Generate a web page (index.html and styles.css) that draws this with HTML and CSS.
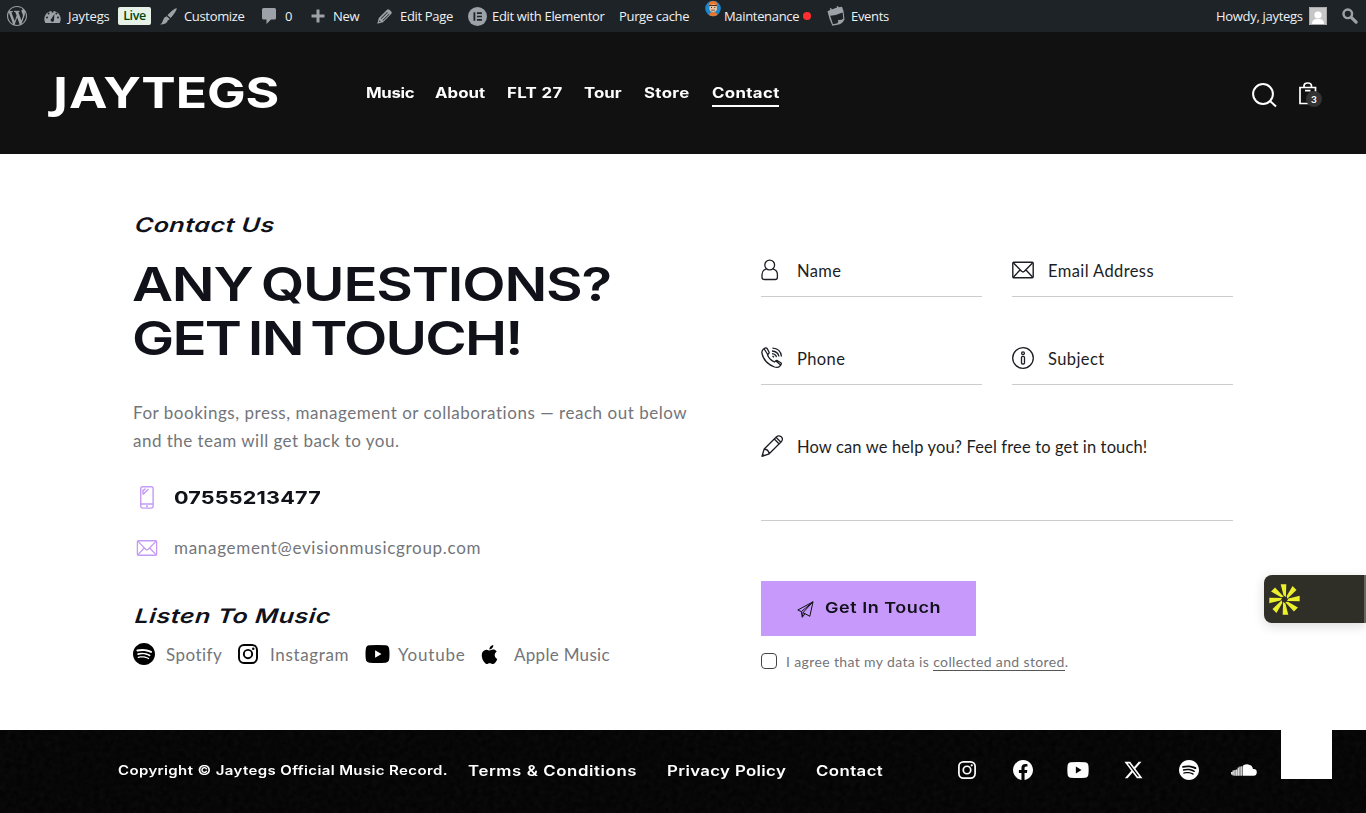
FILE: index.html
```html
<!DOCTYPE html>
<html lang="en">
<head>
    <meta charset="UTF-8">
    <meta name="viewport" content="width=device-width, initial-scale=1.0">
    <title>Contact - Jaytegs</title>
    <link rel="stylesheet" href="styles.css">
</head>
<body>
    <!-- shared icons -->
    <svg class="sprite" width="0" height="0">
        <symbol id="spotify" viewBox="0 0 24 24"><path d="M12 0C5.4 0 0 5.4 0 12s5.4 12 12 12 12-5.4 12-12S18.66 0 12 0zm5.521 17.34c-.24.359-.66.48-1.021.24-2.82-1.74-6.36-2.101-10.561-1.141-.418.122-.779-.179-.899-.539-.12-.421.18-.78.54-.9 4.56-1.021 8.52-.6 11.64 1.32.42.18.479.659.301 1.02zm1.44-3.3c-.301.42-.841.6-1.262.3-3.239-1.98-8.159-2.58-11.939-1.38-.479.12-1.02-.12-1.14-.6-.12-.48.12-1.021.6-1.141C9.6 9.9 15 10.561 18.72 12.84c.361.181.54.78.241 1.2zm.12-3.36C15.24 8.4 8.82 8.16 5.16 9.301c-.6.179-1.2-.181-1.38-.721-.18-.601.18-1.2.72-1.381 4.26-1.26 11.28-1.02 15.721 1.621.539.3.719 1.02.419 1.56-.299.421-1.02.599-1.559.3z"/></symbol>
        <symbol id="instagram" viewBox="0 0 24 24"><rect x="1.2" y="1.2" width="21.6" height="21.6" rx="6" fill="none" stroke="currentColor" stroke-width="2.3"/><circle cx="12" cy="12" r="5" fill="none" stroke="currentColor" stroke-width="2.3"/><circle cx="18.3" cy="5.7" r="1.5"/></symbol>
        <symbol id="youtube" viewBox="0 0 24 18"><path fill-rule="evenodd" d="M4 .3Q12-.3 20 .3Q23.4.6 23.7 4Q24.3 9 23.7 14Q23.4 17.4 20 17.7Q12 18.3 4 17.7Q.6 17.4.3 14Q-.3 9 .3 4Q.6.6 4 .3zM9.6 5.2v7.6L16 9z"/></symbol>
        <symbol id="apple" viewBox="0 0 24 24"><path d="M12.152 6.896c-.948 0-2.415-1.078-3.96-1.04-2.04.027-3.91 1.183-4.961 3.014-2.117 3.675-.546 9.103 1.519 12.09 1.013 1.454 2.208 3.09 3.792 3.039 1.52-.065 2.09-.987 3.935-.987 1.831 0 2.35.987 3.96.948 1.637-.026 2.676-1.48 3.676-2.948 1.156-1.688 1.636-3.325 1.662-3.415-.039-.013-3.182-1.221-3.22-4.857-.026-3.04 2.48-4.494 2.597-4.559-1.429-2.09-3.623-2.324-4.39-2.376-2-.156-3.675 1.09-4.61 1.09zM15.53 3.83c.843-1.012 1.4-2.427 1.245-3.83-1.207.052-2.662.805-3.532 1.818-.78.896-1.454 2.338-1.273 3.714 1.338.104 2.715-.688 3.559-1.701"/></symbol>
        <symbol id="mail" viewBox="0 0 22 17"><g fill="none" stroke="currentColor" stroke-width="1.4"><rect x=".8" y=".8" width="20.4" height="15.4" rx="1"/><path d="M1.5 1.5L9.6 9.8Q11 11 12.4 9.8L20.5 1.5M1.5 15.5L8 8.5M20.5 15.5L14 8.5"/></g></symbol>
    </svg>

    <div class="adminbar">
        <svg class="ab-icon i-wp" viewBox="0 0 20 20"><path d="M20 10c0-5.51-4.49-10-10-10C4.48 0 0 4.49 0 10c0 5.52 4.48 10 10 10 5.51 0 10-4.48 10-10zM7.78 15.37L4.37 6.22c.55-.02 1.17-.08 1.17-.08.5-.06.44-1.13-.06-1.11 0 0-1.45.11-2.37.11-.18 0-.37 0-.58-.01C4.12 2.69 6.87 1.11 10 1.11c2.33 0 4.45.87 6.05 2.34-.68-.11-1.65.39-1.65 1.58 0 .74.45 1.36.9 2.1.35.61.55 1.36.55 2.46 0 1.49-1.4 5-1.4 5l-3.03-8.37c.54-.02.82-.17.82-.17.5-.05.44-1.25-.06-1.22 0 0-1.44.12-2.38.12-.87 0-2.33-.12-2.33-.12-.5-.03-.56 1.2-.06 1.22l.92.08 1.26 3.41zM17.41 10c.24-.64.74-1.87.43-4.25.7 1.29 1.05 2.71 1.05 4.25 0 3.29-1.73 6.24-4.4 7.78.97-2.59 1.94-5.2 2.92-7.78zM6.1 18.09C3.12 16.65 1.11 13.53 1.11 10c0-1.3.23-2.48.72-3.59C3.25 10.3 4.67 14.2 6.1 18.09zm4.03-6.63l2.58 6.98c-.86.29-1.76.45-2.71.45-.79 0-1.57-.11-2.29-.33.81-2.38 1.62-4.74 2.42-7.1z"/></svg>
        <svg class="ab-icon i-dash" viewBox="0 0 17 14"><path d="M1.3 14A8.2 8.2 0 1 1 15.7 14z"/><g fill="#1d2327"><circle cx="3" cy="8.5" r="1"/><circle cx="4.6" cy="4.6" r="1"/><circle cx="8.5" cy="2.8" r="1"/><circle cx="12.4" cy="4.6" r="1"/><circle cx="14" cy="8.5" r="1"/><path d="M10.4 5L10 11a1.7 1.7 0 1 1-2.6-1.3z"/></g></svg>
        <span class="ab-text ab-site">Jaytegs</span>
        <span class="ab-live">Live</span>
        <svg class="ab-icon i-brush" viewBox="0 0 17 17"><path d="M16.6.3C17.3 1 15 5 10.6 10L7.5 7.3C11.6 2.6 15.8-.5 16.6.3zM6.7 8.2L9.7 10.9Q8.9 12 7.9 12.2Q6.8 16.5 0 16.6Q2.6 14.8 3.1 12Q3.9 9 6.7 8.2z"/></svg>
        <span class="ab-text ab-customize">Customize</span>
        <svg class="ab-icon i-comment" viewBox="0 0 14 16"><path d="M1.5 0h11q1.5 0 1.5 1.5v8.5q0 1.5-1.5 1.5H9L4.5 16v-4.5h-3Q0 11.5 0 10V1.5Q0 0 1.5 0z"/></svg>
        <span class="ab-text ab-zero">0</span>
        <svg class="ab-icon i-plus" viewBox="0 0 14 14"><path d="M5.5.5h3v5h5v3h-5v5h-3v-5h-5v-3h5z"/></svg>
        <span class="ab-text ab-new">New</span>
        <svg class="ab-icon i-pencil" viewBox="0 0 15 15"><path fill-rule="evenodd" d="M10 .8Q11.2-.2 12.4.8L14.2 2.6Q15.2 3.8 14.2 5L6 13.2L.3 14.7L1.8 9zM10.2 2.9L3.7 9.4L4.3 10L10.8 3.5zM12 4.7L5.5 11.2L6 11.7L12.5 5.2zM2.6 11.2L1.9 13.1L3.8 12.4z"/></svg>
        <span class="ab-text ab-edit">Edit Page</span>
        <svg class="ab-icon i-elementor" viewBox="0 0 18 18"><circle cx="9" cy="9" r="9"/><path fill="#1d2327" d="M5.2 5h1.7v8H5.2zM8.5 5h4.7v1.6H8.5zM8.5 8.2h4.7v1.6H8.5zM8.5 11.4h4.7V13H8.5z"/></svg>
        <span class="ab-text ab-elementor">Edit with Elementor</span>
        <span class="ab-text ab-purge">Purge cache</span>
        <svg class="i-worker" viewBox="0 0 16 16"><circle cx="8" cy="8" r="7.8" fill="#1787cf"/><path fill="#e8762c" d="M3.6 5.5Q3.5.4 8.2.4t4.5 5.1zM4 14.5q.5-3.1 4.2-3.1t4.2 3.1Q8 17 4 14.5z"/><circle cx="8.2" cy="7.6" r="3.9" fill="#e9c3a4"/><path fill="#4b2d20" d="M4.2 4.4h7.7v1H4.2zM6.2 9.2h3.6v.7H6.2zM6 6.5h1v1H6zM9.3 6.5h1v1h-1z"/></svg>
        <span class="ab-text ab-maint">Maintenance</span>
        <span class="ab-dot"></span>
        <svg class="ab-icon i-events" viewBox="0 0 18 20"><path fill-rule="evenodd" d="M.5 5.3L3.2 4L2.8 2.5L4.2 2L4.8 3.4L10 1.6L9.6.5L11 .1L11.5 1.2L15 .8L16.5 5L17.5 13.4Q15 18 10.5 18.7L5.4 19.7Q2 12.7.5 5.3zM3.2 9.7L6 18.3L10.5 17.3Q11.700 15.500 11 13.800Q14 14.500 16.300 12.800L15.600 6.500Q9 9.500 3.200 9.700z"/></svg>
        <span class="ab-text ab-events">Events</span>
        <div class="ab-right">
            <span class="ab-text ab-howdy">Howdy, jaytegs</span>
            <svg class="i-avatar" viewBox="0 0 18 18"><path fill="#c6c6c6" d="M0 0h18v18H0z"/><path fill="none" stroke="#aaa" d="M.5.5h17v17H.5z"/><circle cx="9" cy="8" r="3.6" fill="#fff"/><path fill="#fff" d="M3 17q0-4.500 4-5h4q4 .5 4 5z"/></svg>
            <svg class="i-ab-search" viewBox="0 0 16 16"><circle cx="5.8" cy="5.8" r="4.3" fill="none" stroke="#9ca2a7" stroke-width="2.4"/><path stroke="#9ca2a7" stroke-width="3.2" stroke-linecap="round" d="M9.8 9.8l4.3 4.3"/></svg>
        </div>
    </div>

    <header class="header">
        <a class="logo"><span class="wide"><span class="logo-j">J</span>AYTEGS</span></a>
        <nav class="nav">
            <a class="n1"><span class="wide">Music</span></a>
            <a><span class="wide">About</span></a>
            <a class="n3"><span class="wide">FLT 27</span></a>
            <a><span class="wide">Tour</span></a>
            <a class="n3"><span class="wide">Store</span></a>
            <a class="n3 active"><span class="wide">Contact</span></a>
        </nav>
        <div class="header-tools">
            <svg class="i-search" viewBox="0 0 25 25"><g fill="none" stroke="#fff" stroke-width="2"><circle cx="11" cy="11" r="9.9"/><path d="M18 18l6 5.5"/></g></svg>
            <div class="cart">
                <svg class="i-bag" viewBox="0 0 18 23"><g fill="none" stroke="#fff" stroke-width="1.7"><path d="M1 5.5h15.5v16H1zM5 5.5V4q0-3 3.750-3T12.500 4v1.500M6 8.700h5.500"/></g></svg>
                <span class="cart-count">3</span>
            </div>
        </div>
    </header>

    <main class="main">
        <section class="info">
            <h4 class="subtitle"><span class="wide">Contact Us</span></h4>
            <h1 class="title"><span class="wide t1">ANY QUESTIONS?</span><span class="wide t2">GET IN TOUCH!</span></h1>
            <p class="intro"><span class="l1">For bookings, press, management or collaborations — reach out below</span><br><span class="l2">and the team will get back to you.</span></p>
            <div class="contact-row phone">
                <svg class="i-mobile" viewBox="0 0 14 23"><g fill="none" stroke="#c49bf5" stroke-width="1.4"><rect x=".7" y=".7" width="12.4" height="21.4" rx="2"/><path d="M1 18h12M6 20.2h2M3 5l2.500-2.500M3 8.500L8.500 3M3 3.500v5"/></g></svg>
                <span class="wide">07555213477</span>
            </div>
            <div class="contact-row email">
                <svg class="i-mail"><use href="#mail"/></svg>
                <span class="mail-text">management@evisionmusicgroup.com</span>
            </div>
            <h4 class="subtitle listen"><span class="wide">Listen To Music</span></h4>
            <div class="music-links">
                <a class="a-spotify"><svg class="m-spotify"><use href="#spotify"/></svg><span>Spotify</span></a>
                <a class="a-instagram"><svg class="m-instagram"><use href="#instagram"/></svg><span>Instagram</span></a>
                <a class="a-youtube"><svg class="m-youtube"><use href="#youtube"/></svg><span>Youtube</span></a>
                <a class="a-apple"><svg class="m-apple"><use href="#apple"/></svg><span>Apple Music</span></a>
            </div>
        </section>

        <form class="form">
            <div class="fields">
                <label class="field">
                    <svg viewBox="0 0 22 22"><g fill="none" stroke="currentColor" stroke-width="1.3"><circle cx="8.7" cy="6" r="4.9"/><path d="M5.6 9.8Q1 11 1 15.5v2.8q0 2.2 2.2 2.2h11q2.2 0 2.2-2.2v-2.8Q16.4 11 11.8 9.8"/></g></svg>
                    <input type="text" placeholder="Name">
                </label>
                <label class="field">
                    <svg><use href="#mail"/></svg>
                    <input type="text" placeholder="Email Address">
                </label>
                <label class="field">
                    <svg viewBox="0 0 22 22"><g fill="none" stroke="currentColor" stroke-width="1.3"><path d="M2.5 2L4.5.9Q5.5.6 6.2 1.7L8 5Q8.5 6 7.5 6.8L6.5 7.8Q8 12.5 13.5 15L14.8 13.8Q15.5 13.2 16.5 13.7L19.8 15.8Q20.8 16.5 20 17.5L18.5 19.5Q17 21 13.5 20Q3 16 1 6.5Q.5 3.5 2.5 2zM3.2 2l3.5 5.5M15 14l4.5 4"/><path d="M11.5 1.2Q19.5 1.5 20.5 9.5M11 4Q17 4.3 18 9.5M11 6.7Q14.7 7 15.5 10.2M11.5 9l1.5 1.3"/></g></svg>
                    <input type="text" placeholder="Phone">
                </label>
                <label class="field">
                    <svg viewBox="0 0 22 22"><g fill="none" stroke="currentColor" stroke-width="1.3"><circle cx="11" cy="11" r="10.3"/><circle cx="11" cy="6.3" r="1.4"/><rect x="9.5" y="9.3" width="3" height="7.7" rx="1.2"/></g></svg>
                    <input type="text" placeholder="Subject">
                </label>
                <label class="field message">
                    <svg viewBox="0 0 22 22"><g fill="none" stroke="currentColor" stroke-width="1.3" stroke-linejoin="round"><path d="M1 21.3L3.2 14L15.5 1.8Q17.8-.2 20.2 1.8T20.5 6.5L8.2 18.8zM3.2 14Q7.5 14.5 8.2 18.8M13.3 4l4.7 4.7M15 2.3l4.7 4.7M1.5 19.3L3 20.7"/></g></svg>
                    <textarea placeholder="How can we help you? Feel free to get in touch!"></textarea>
                </label>
            </div>
            <button type="button" class="submit">
                <svg viewBox="0 0 17 17"><path fill="none" stroke="currentColor" stroke-width="1" stroke-linejoin="round" d="M16 .8L.8 9L4.3 10.6L5.3 16.2L8 12.7L12.8 15.3zM16 .8L4.3 10.6M16 .8L6 11.6L5.3 16.2M6 11.6L8 12.7"/></svg>
                <span class="wide">Get In Touch</span>
            </button>
            <label class="agree"><span class="box"></span><span class="agree-text">I agree that my data is <a>collected and stored</a>.</span></label>
        </form>
    </main>

    <footer class="footer">
        <svg class="noise"><filter id="grain"><feTurbulence type="fractalNoise" baseFrequency="0.18" numOctaves="3"/><feColorMatrix type="saturate" values="0"/></filter><rect width="100%" height="100%" filter="url(#grain)"/></svg>
        <p class="copyright"><span class="wide">Copyright © Jaytegs Official Music Record.</span></p>
        <nav class="footer-nav">
            <a class="f1"><span class="wide">Terms &amp; Conditions</span></a>
            <a class="f2"><span class="wide">Privacy Policy</span></a>
            <a class="f3"><span class="wide">Contact</span></a>
        </nav>
        <div class="socials">
            <svg class="s-insta"><use href="#instagram"/></svg>
            <svg class="s-face" viewBox="0 0 24 24"><path d="M24 12.073c0-6.627-5.373-12-12-12s-12 5.373-12 12c0 5.99 4.388 10.954 10.125 11.854v-8.385H7.078v-3.47h3.047V9.43c0-3.007 1.792-4.669 4.533-4.669 1.312 0 2.686.235 2.686.235v2.953H15.83c-1.491 0-1.956.925-1.956 1.874v2.25h3.328l-.532 3.47h-2.796v8.385C19.612 23.027 24 18.062 24 12.073z"/></svg>
            <svg class="s-tube"><use href="#youtube"/></svg>
            <svg class="s-x" viewBox="0 0 24 24"><path d="M18.9 1.15h3.68l-8.04 9.19L24 22.85h-7.41l-5.8-7.58-6.64 7.58H.47l8.6-9.83L0 1.15h7.59l5.24 6.93zM17.61 20.64h2.04L6.49 3.24H4.3z"/></svg>
            <svg class="s-spot"><use href="#spotify"/></svg>
            <svg class="s-cloud" viewBox="0 0 26 12"><path d="M12 1.5Q14.5.2 17 .4Q21.3.8 22 5Q25.7 4.6 25.8 8.2Q25.7 11.7 22.5 11.7H12z"/><path d="M.7 8v2.5M2.2 6.5v5M3.9 6v5.7M5.6 5.5v6.2M7.3 3.5v8.2M9 2.5v9.2M10.8 2.3v9.4" stroke="#ddd" stroke-width="1.45"/></svg>
        </div>
        <div class="scroll-top"></div>
    </footer>

    <div class="widget">
        <svg viewBox="-15.5 -15.5 31 31"><g fill="#ecf02a"><path id="ray" d="M-3.8-15.2h5.6L1.400-2.500L-.9-4z"/><use href="#ray" transform="rotate(45)"/><use href="#ray" transform="rotate(90)"/><use href="#ray" transform="rotate(135)"/><use href="#ray" transform="rotate(180)"/><use href="#ray" transform="rotate(225)"/><use href="#ray" transform="rotate(270)"/><use href="#ray" transform="rotate(315)"/></g></svg>
    </div>
</body>
</html>
```
FILE: styles.css
```css
* {
    box-sizing: border-box;
}
body {
    margin: 0;
    width: 1366px;
    height: 813px;
    overflow: hidden;
    position: relative;
    background: #fff;
    color: #73757a;
    font-family: Lato, "Liberation Sans", sans-serif;
    font-size: 17px;
}
h1, h4, p {
    margin: 0;
}
svg {
    flex: none;
    fill: currentColor;
}
.sprite {
    position: absolute;
}

/* display face: stretched sideways from its left edge */
.wide {
    display: inline-block;
    font-family: Inter, "Liberation Sans", sans-serif;
    font-weight: 700;
    white-space: nowrap;
    transform-origin: 0 50%;
    transform: scaleX(1.2);
}

/* admin bar */
.adminbar {
    display: flex;
    align-items: center;
    height: 32px;
    background: #1d2327;
    color: #f0f0f1;
    font-family: "Open Sans", "Noto Sans", sans-serif;
    font-size: 13px;
    line-height: 32px;
    white-space: nowrap;
}
.ab-text {
    flex: none;
    letter-spacing: -0.33px;
}
.ab-icon {
    color: #9ca2a7;
}
.i-wp { width: 20px; height: 20px; margin-left: 7px; }
.i-dash { width: 17px; height: 14px; margin-left: 17px; }
.ab-site { width: 43px; margin-left: 7px; letter-spacing: -0.1px; }
.ab-live {
    width: 33px;
    height: 18px;
    margin-left: 7px;
    background: #e6f2e8;
    border-radius: 2px;
    color: #00450c;
    font-weight: 600;
    font-size: 12.5px;
    line-height: 18px;
    text-align: center;
    letter-spacing: -0.4px;
}
.i-brush { width: 17px; height: 17px; margin-left: 9px; }
.ab-customize { width: 61px; margin-left: 7px; }
.i-comment { width: 14px; height: 16px; margin-left: 17px; }
.ab-zero { width: 8px; margin-left: 9px; }
.i-plus { width: 14px; height: 14px; margin-left: 18px; }
.ab-new { width: 27px; margin-left: 8px; }
.i-pencil { width: 15px; height: 15px; margin-left: 17px; }
.ab-edit { width: 54px; margin-left: 8px; }
.i-elementor { width: 19px; height: 19px; margin-left: 14px; }
.ab-elementor { width: 113px; margin-left: 5px; }
.ab-purge { width: 71px; margin-left: 14px; }
.i-worker { width: 16px; height: 17px; margin: -16px 0 0 15px; }
.ab-maint { width: 75px; margin-left: 3px; }
.ab-dot {
    width: 8px;
    height: 8px;
    margin-left: 4px;
    border-radius: 50%;
    background: #ff2f2f;
}
.i-events { width: 18px; height: 20px; margin-left: 16px; }
.ab-events { margin-left: 6px; }
.ab-right {
    display: flex;
    align-items: center;
    margin-left: auto;
}
.ab-howdy { width: 87px; letter-spacing: -0.3px; }
.i-avatar { width: 18px; height: 18px; margin-left: 6px; }
.i-ab-search { width: 16px; height: 16px; margin: 0 8px 0 15px; }

/* header */
.header {
    display: flex;
    height: 122px;
    background: #111;
    color: #fff;
}
.logo {
    width: 318px;
    padding: 32px 0 0 52px;
    font-size: 43px;
    line-height: 56px;
    letter-spacing: -0.1px;
}
.logo-j {
    font-family: "Open Sans", sans-serif;
}
.nav {
    display: grid;
    grid-template-columns: 48px 51px 56px 39px 47px 67px;
    column-gap: 21px;
    align-content: start;
    margin: 50px 0 0 48px;
    font-size: 14px;
    line-height: 22px;
}
.nav a {
    height: 25px;
}
.n1 { letter-spacing: -0.3px; }
.n3 { letter-spacing: 0.3px; }
.nav .active {
    border-bottom: 2px solid #fff;
}
.header-tools {
    display: flex;
    margin: 50px 42px 0 auto;
}
.i-search { width: 25px; height: 25px; margin-top: 1px; }
.cart {
    position: relative;
    width: 25px;
    margin-left: 22px;
}
.i-bag { width: 18px; height: 23px; }
.cart-count {
    position: absolute;
    left: 7px;
    top: 9px;
    width: 16px;
    height: 16px;
    border-radius: 50%;
    background: #333;
    font-size: 10px;
    font-weight: 700;
    line-height: 16px;
    text-align: center;
}

/* main */
.main {
    display: flex;
    height: 576px;
}
.info {
    width: 761px;
    padding: 56px 0 0 133px;
}
.subtitle {
    padding-left: 2px;
    color: #111219;
    font-size: 20px;
    line-height: 28px;
    letter-spacing: 0.4px;
}
.subtitle .wide {
    font-weight: 600;
    font-style: italic;
    transform: scaleX(1.25) skewX(-5deg);
}
.title {
    margin-top: 18px;
    margin-left: -1px;
    color: #111219;
    font-size: 47px;
    line-height: 54px;
    word-spacing: -4px;
}
.title .wide {
    display: block;
    font-weight: 600;
}
.t1 { letter-spacing: -1px; }
.t2 { letter-spacing: -1.5px; }
.intro {
    margin-top: 34px;
    line-height: 28px;
    white-space: nowrap;
}
.l1 { letter-spacing: 0.53px; }
.l2 { letter-spacing: 0.47px; }
.contact-row {
    display: flex;
    align-items: center;
    height: 28px;
}
.phone {
    margin-top: 28px;
    color: #111219;
    font-size: 18px;
    letter-spacing: 0.15px;
}
.i-mobile { width: 14px; height: 23px; margin: 1px 20px 0 7px; }
.email {
    margin-top: 22px;
}
.i-mail { width: 22px; height: 16px; margin: 1px 16px 0 3px; color: #c49bf5; }
.mail-text { letter-spacing: 0.7px; }
.listen {
    margin-top: 40px;
}
.music-links {
    display: grid;
    grid-template-columns: 105px 127px 115px 140px;
    margin-top: 10px;
    height: 28px;
}
.music-links a {
    display: flex;
    align-items: center;
    white-space: nowrap;
}
.music-links svg { color: #000; }
.m-spotify { width: 22px; height: 22px; margin-right: 11px; }
.m-instagram { width: 20px; height: 20px; margin-right: 12px; }
.m-youtube { width: 25px; height: 18px; margin-right: 8px; }
.m-apple { width: 19px; height: 19px; margin-right: 15px; }
.a-spotify { letter-spacing: 0.45px; }
.a-instagram { letter-spacing: 0.65px; }
.a-youtube { letter-spacing: 0.8px; }
.a-apple { letter-spacing: 0.3px; }

/* form */
.form {
    width: 472px;
    padding-top: 103px;
}
.fields {
    display: grid;
    grid-template-columns: 221px 221px;
    column-gap: 30px;
    row-gap: 48px;
}
.field {
    display: flex;
    height: 40px;
    border-bottom: 1px solid #ccc;
    color: #1c1e24;
}
.field svg {
    width: 22px;
    height: 22px;
    margin-top: 2px;
}
.field input,
.field textarea {
    flex: 1;
    min-width: 0;
    height: 28px;
    margin-left: 14px;
    padding: 0;
    border: 0;
    outline: 0;
    background: none;
    resize: none;
    color: #1c1e24;
    font: 16.5px/28px Lato, "Liberation Sans", sans-serif;
    letter-spacing: 0.4px;
}
.field textarea {
    letter-spacing: 0.14px;
}
.field ::placeholder {
    color: #1c1e24;
    opacity: 1;
}
.message {
    grid-column: span 2;
    height: 88px;
}
.submit {
    display: flex;
    align-items: center;
    width: 215px;
    height: 55px;
    margin-top: 60px;
    padding: 0 0 2px 36px;
    border: 0;
    background: #c799fb;
    color: #111219;
    font-size: 15px;
    letter-spacing: 0.45px;
}
.submit .wide {
    font-weight: 600;
}
.submit svg { width: 17px; height: 17px; margin: 3px 11px 0 0; }
.agree {
    display: flex;
    align-items: center;
    height: 20px;
    margin-top: 15px;
    font-size: 14px;
    letter-spacing: 0.37px;
    white-space: nowrap;
}
.box {
    width: 16px;
    height: 16px;
    margin: -1px 9px 0 0;
    border: 1px solid #444;
    border-radius: 4px;
}
.agree a {
    border-bottom: 1px solid #555;
}

/* footer */
.footer {
    position: relative;
    display: flex;
    height: 83px;
    background: #020202;
    color: #fff;
    line-height: 20px;
}
.footer .wide {
    font-weight: 600;
}
.noise {
    position: absolute;
    width: 100%;
    height: 100%;
    opacity: 0.05;
}
.copyright {
    width: 350px;
    margin: 31px 0 0 118px;
    font-size: 12.5px;
    letter-spacing: 0.31px;
}
.footer-nav {
    display: grid;
    grid-template-columns: 199px 149px 67px;
    margin-top: 31px;
    font-size: 14px;
}
.f1 { letter-spacing: 0.5px; }
.f2 { letter-spacing: 0.3px; }
.f3 { letter-spacing: 0.35px; }
.socials {
    display: grid;
    grid-template-columns: repeat(6, 55.4px);
    place-items: center;
    height: 79px;
    margin-left: 56.5px;
}
.s-insta { width: 18px; height: 18px; }
.s-face { width: 20px; height: 20px; }
.s-tube { width: 22px; height: 16px; }
.s-x { width: 19px; height: 18px; }
.s-spot { width: 20px; height: 20px; }
.s-cloud { width: 26px; height: 12px; }
.scroll-top {
    position: absolute;
    left: 1281px;
    top: 0;
    width: 51px;
    height: 49px;
    background: #fff;
}

/* floating accessibility tab */
.widget {
    position: absolute;
    top: 575px;
    right: 0;
    display: flex;
    align-items: center;
    width: 102px;
    height: 48px;
    padding-left: 5px;
    background: #2f2e27;
    border-right: 2px solid #66655d;
    border-radius: 8px 0 0 8px;
    box-shadow: 0 3px 12px rgba(0, 0, 0, 0.15);
}
.widget svg { width: 31px; height: 31px; }
```
